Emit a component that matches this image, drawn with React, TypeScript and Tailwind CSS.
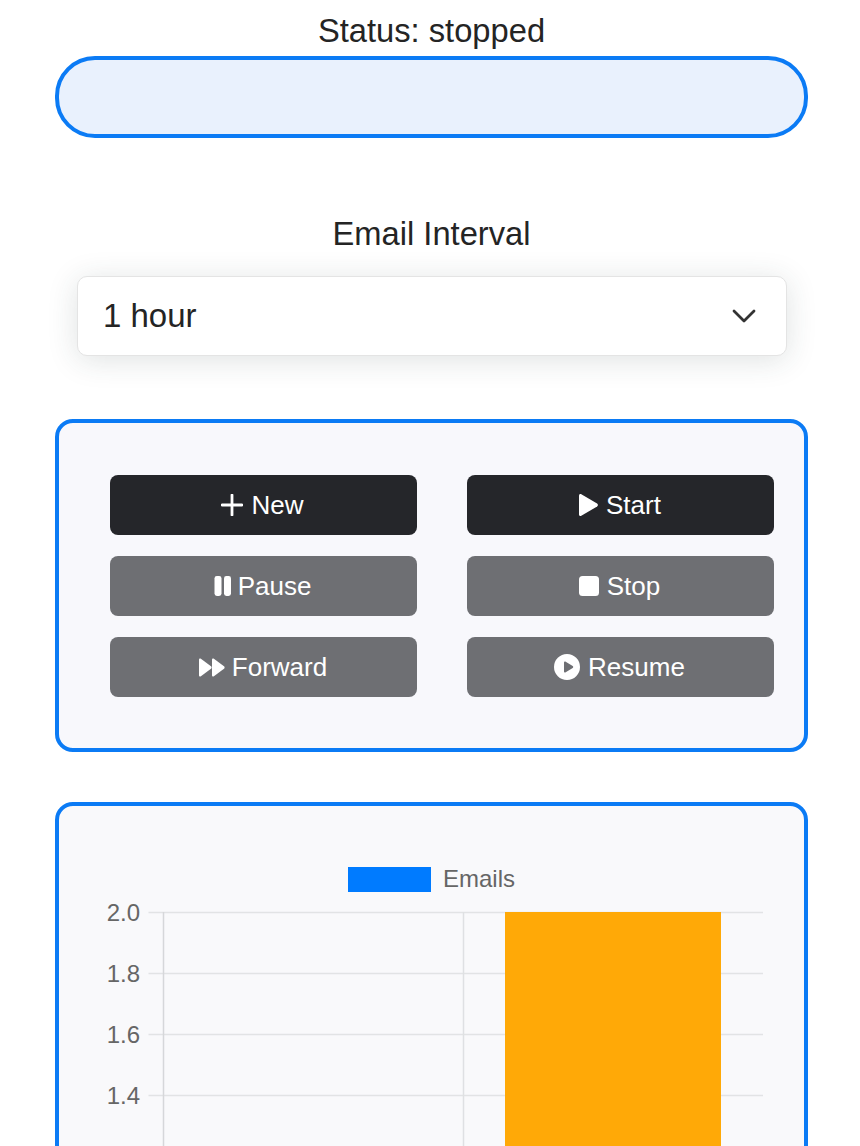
import React from "react";

const Plus = () => (
  <svg width="22" height="22" viewBox="0 0 22 22" className="shrink-0">
    <path d="M11 1v20M1 11h20" stroke="#fff" strokeWidth="2.8" strokeLinecap="round" fill="none" />
  </svg>
);
const Play = () => (
  <svg width="21" height="24" viewBox="0 0 21 24" className="shrink-0">
    <path d="M1 2.5C1 1.2 2.2.6 3.3 1.2l15.8 9.3c1.1.7 1.1 2.3 0 3L3.3 22.8C2.2 23.4 1 22.8 1 21.5z" fill="#fff" />
  </svg>
);
const Pause = () => (
  <svg width="18" height="20" viewBox="0 0 18 20" className="shrink-0">
    <rect x="0.5" y="0" width="7" height="20" rx="2.4" fill="#fff" />
    <rect x="10" y="0" width="7" height="20" rx="2.4" fill="#fff" />
  </svg>
);
const Stop = () => (
  <svg width="20" height="20" viewBox="0 0 20 20" className="shrink-0">
    <rect width="20" height="20" rx="3.5" fill="#fff" />
  </svg>
);
const Forward = () => (
  <svg width="27" height="19" viewBox="0 0 27 19" className="shrink-0">
    <path d="M1 1.8C1 .7 2 .1 2.9.7L13 8.2c.8.6.8 2 0 2.6L2.9 18.3c-.9.6-1.9 0-1.9-1.1z" fill="#fff" />
    <path d="M14 1.8c0-1.1 1-1.7 1.9-1.1L26 8.2c.8.6.8 2 0 2.6l-10.1 7.5c-.9.6-1.9 0-1.9-1.1z" fill="#fff" />
  </svg>
);
const Resume = () => (
  <svg width="26" height="26" viewBox="0 0 26 26" className="shrink-0">
    <path
      fillRule="evenodd"
      d="M13 0a13 13 0 1 1 0 26a13 13 0 0 1 0-26zM10 8.6v8.8c0 .9.9 1.4 1.7.9l7-4.4c.7-.4.7-1.4 0-1.8l-7-4.4c-.8-.5-1.7 0-1.7.9z"
      fill="#fff"
    />
  </svg>
);

function Btn({ dark, icon, label, gap }: { dark?: boolean; icon: React.ReactNode; label: string; gap: string }) {
  return (
    <button
      className={
        "h-[60px] rounded-lg flex items-center justify-center pr-[2px] text-white text-[26px] " +
        gap +
        " " +
        (dark ? "bg-[#25262a]" : "bg-[#6e6f73]")
      }
    >
      {icon}
      <span>{label}</span>
    </button>
  );
}

const ticks = [
  { y: 0.5, label: "2.0" },
  { y: 61.5, label: "1.8" },
  { y: 122.5, label: "1.6" },
  { y: 183.5, label: "1.4" },
];

export default function App() {
  return (
    <div className="h-[1146px] overflow-hidden bg-white pl-[55px] pr-[52px] text-[#242424] font-['Liberation_Sans',Arial,sans-serif]">
      <div className="h-[56px] flex items-center justify-center text-[32.7px] leading-none pt-[6px]">
        Status: stopped
      </div>
      <div className="h-[82px] rounded-[40px] border-[4px] border-[#0b7bf5] bg-[#e9f1fd]" />

      <div className="mt-[76px] h-[62px] flex items-center justify-center text-[32.7px] leading-none pb-[22px]">
        Email Interval
      </div>
      <div className="ml-[22px] mr-[21px] h-[80px] rounded-[10px] border border-[#e4e4e4] bg-white shadow-[0_4px_30px_rgba(40,60,60,0.15)] flex items-center justify-between pl-[25px] pr-[30px]">
        <span className="text-[33px] leading-none pb-[2px]">1 hour</span>
        <svg width="24" height="14" viewBox="0 0 24 14" fill="none">
          <path d="M2 2l10 10L22 2" stroke="#333" strokeWidth="2.8" strokeLinecap="round" strokeLinejoin="round" />
        </svg>
      </div>

      <div className="mt-[63px] h-[333px] rounded-[18px] border-[4px] border-[#0b7bf5] bg-[#f8f8fc] pt-[52px] pl-[51px] pr-[30px]">
        <div className="grid grid-cols-2 gap-x-[50px] gap-y-[21px]">
          <Btn dark icon={<Plus />} label="New" gap="gap-[8px]" />
          <Btn dark icon={<Play />} label="Start" gap="gap-[7px]" />
          <Btn icon={<Pause />} label="Pause" gap="gap-[6px]" />
          <Btn icon={<Stop />} label="Stop" gap="gap-[8px]" />
          <Btn icon={<Forward />} label="Forward" gap="gap-[7px]" />
          <Btn icon={<Resume />} label="Resume" gap="gap-[8px]" />
        </div>
      </div>

      <div className="mt-[50px] h-[400px] rounded-t-[18px] border-[4px] border-[#0b7bf5] bg-[#f9f9fb] pt-[61px]">
        <div className="flex items-center pl-[289px] gap-[12px] h-[25px]">
          <div className="w-[83px] h-[25px] bg-[#007bff]" />
          <span className="text-[24px] leading-none text-[#666] pb-[2px]">Emails</span>
        </div>
        <svg width="745" height="240" className="block mt-[20px] overflow-visible">
          {ticks.map((t) => (
            <g key={t.label}>
              <line x1="89.5" x2="704" y1={t.y} y2={t.y} stroke="#e2e3e5" strokeWidth="1.5" />
              <text x="81" y={t.y + 8} textAnchor="end" fontSize="24" fill="#666">
                {t.label}
              </text>
            </g>
          ))}
          <line x1="104.5" x2="104.5" y1="0" y2="240" stroke="#d6d7da" strokeWidth="1.5" />
          <line x1="404.5" x2="404.5" y1="0" y2="240" stroke="#dfe0e3" strokeWidth="1.5" />
          <rect x="446" y="0" width="216" height="240" fill="#ffa907" />
        </svg>
      </div>
    </div>
  );
}
